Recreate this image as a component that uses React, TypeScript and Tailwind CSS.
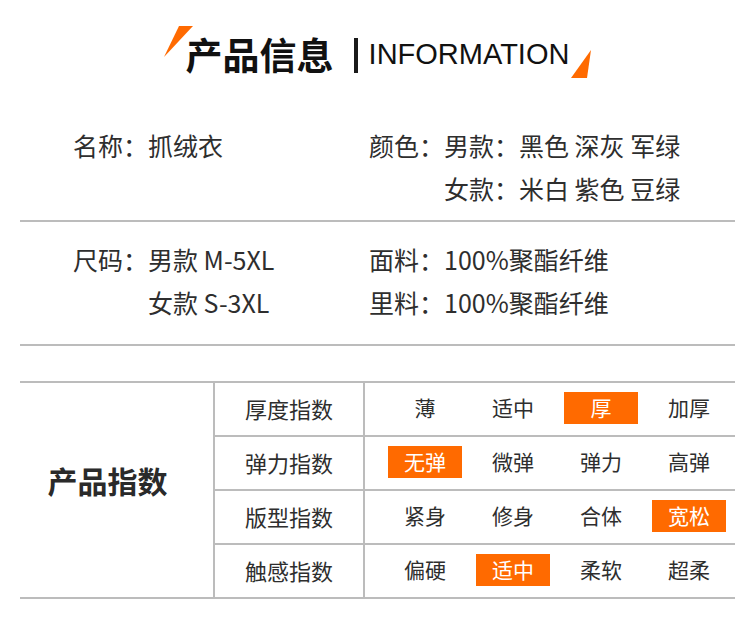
const cjk = "font-['Noto_Sans_CJK_SC','Noto_Sans',sans-serif]";

type Row = { label: string; options: string[]; active: number };

const rows: Row[] = [
  { label: "厚度指数", options: ["薄", "适中", "厚", "加厚"], active: 2 },
  { label: "弹力指数", options: ["无弹", "微弹", "弹力", "高弹"], active: 0 },
  { label: "版型指数", options: ["紧身", "修身", "合体", "宽松"], active: 3 },
  { label: "触感指数", options: ["偏硬", "适中", "柔软", "超柔"], active: 1 },
];

function Title() {
  return (
    <div className="h-[110px] pl-[6px] flex justify-center items-start">
      <svg width="30" height="32" viewBox="0 0 30 32" className="mt-[26px] shrink-0">
        <polygon points="15,0 29,0 0,31" fill="#ff6a00" />
      </svg>
      <h1 className={`${cjk} ml-[-8px] mt-[36px] text-[37px] leading-none font-bold text-[#111]`}>
        产品信息
      </h1>
      <div className="ml-[20px] mt-[38px] w-[4px] h-[35px] bg-[#1a1a1a]" />
      <span className="ml-[11px] mt-[40px] text-[29px] leading-none text-[#111] font-['Liberation_Sans',Arial,sans-serif]">
        INFORMATION
      </span>
      <svg width="21" height="29" viewBox="0 0 21 29" className="ml-[2px] mt-[50px] shrink-0">
        <polygon points="20,0 16,28 0,28" fill="#ff6a00" />
      </svg>
    </div>
  );
}

function Divider() {
  return <div className="ml-[20px] mr-[15px] h-[2px] bg-[#bcbcbc]" />;
}

export default function App() {
  return (
    <div className={`${cjk} w-[750px] h-[628px] bg-white text-[#2e2e2e] overflow-hidden`}>
      <Title />

      <div className="h-[110px] pt-[14px] pl-[73px] grid grid-cols-[296px_1fr] text-[25px] leading-[43px]">
        <div>名称：抓绒衣</div>
        <div>
          <div>颜色：男款：黑色 深灰 军绿</div>
          <div className="pl-[75px]">女款：米白 紫色 豆绿</div>
        </div>
      </div>
      <Divider />

      <div className="h-[122px] pt-[16px] pl-[73px] grid grid-cols-[296px_1fr] text-[25px] leading-[43px]">
        <div>
          <div>尺码：男款 M-5XL</div>
          <div className="pl-[75px]">女款 S-3XL</div>
        </div>
        <div>
          <div>面料：100%聚酯纤维</div>
          <div>里料：100%聚酯纤维</div>
        </div>
      </div>
      <Divider />

      <div className="h-[35px]" />

      <div className="ml-[20px] mr-[15px] flex border-t-2 border-b-2 border-[#bcbcbc]">
        <div className="w-[195px] shrink-0 border-r-2 border-[#bcbcbc] flex items-center justify-center">
          <span className="text-[30px] font-bold text-[#2a2a2a] mr-[18px] mb-[20px]">产品指数</span>
        </div>
        <div className="flex-1 flex flex-col">
          {rows.map((r, i) => (
            <div
              key={r.label}
              className={`flex h-[52px] ${i < rows.length - 1 ? "h-[54px] border-b-2 border-[#bcbcbc]" : ""}`}
            >
              <div className="w-[150px] shrink-0 border-r-2 border-[#bcbcbc] flex items-center justify-center text-[22px] pb-[2px]">
                {r.label}
              </div>
              <div className="pl-[16px] flex items-center pb-[2px]">
                {r.options.map((o, j) => (
                  <div key={o} className="w-[88px] flex justify-center">
                    <span
                      className={`w-[74px] h-[32px] flex items-center justify-center text-[21px] ${
                        j === r.active ? "bg-[#ff6a00] text-white" : ""
                      }`}
                    >
                      {o}
                    </span>
                  </div>
                ))}
              </div>
            </div>
          ))}
        </div>
      </div>
    </div>
  );
}
